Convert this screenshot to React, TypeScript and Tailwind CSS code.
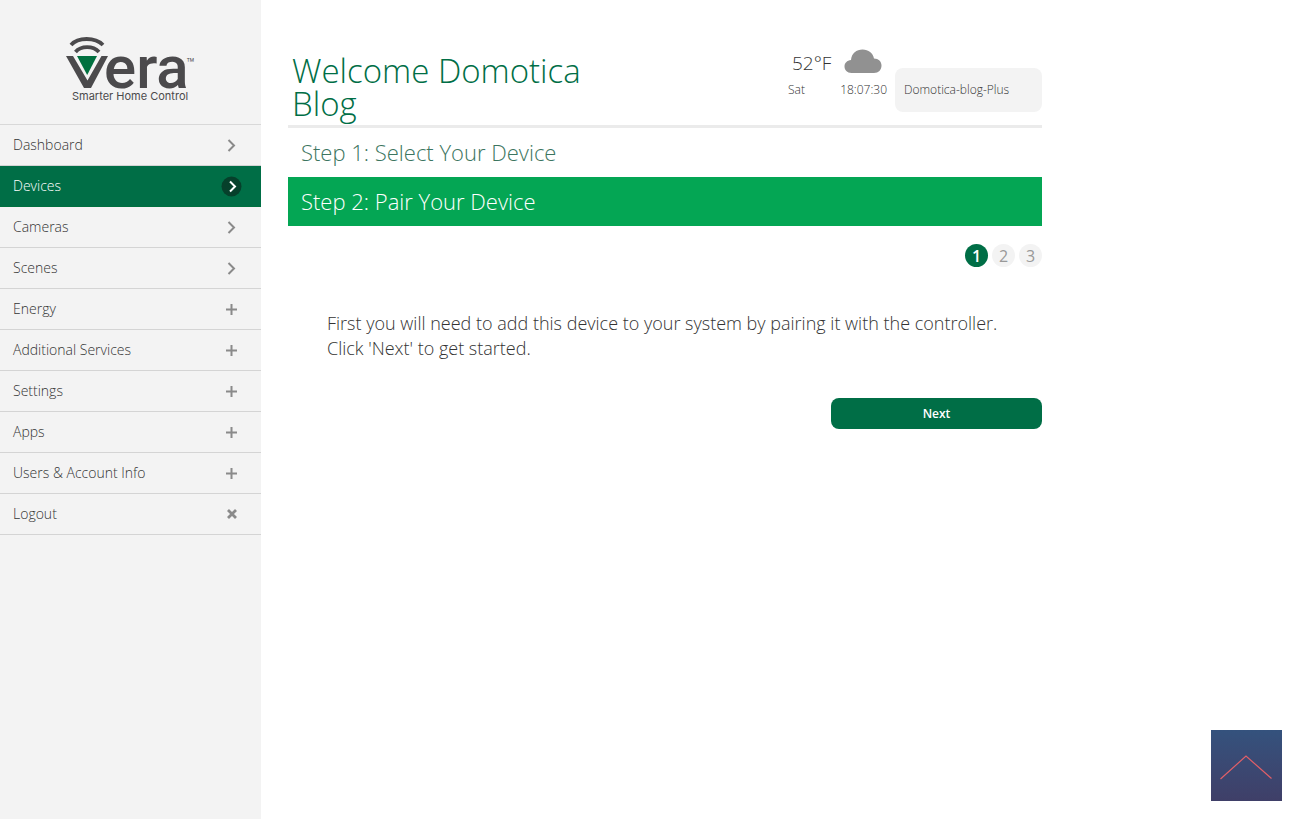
import React from "react";

type Mark = "chevron" | "plus" | "cross";

const navItems: { label: string; mark: Mark; active?: boolean }[] = [
  { label: "Dashboard", mark: "chevron" },
  { label: "Devices", mark: "chevron", active: true },
  { label: "Cameras", mark: "chevron" },
  { label: "Scenes", mark: "chevron" },
  { label: "Energy", mark: "plus" },
  { label: "Additional Services", mark: "plus" },
  { label: "Settings", mark: "plus" },
  { label: "Apps", mark: "plus" },
  { label: "Users & Account Info", mark: "plus" },
  { label: "Logout", mark: "cross" },
];

const markPaths: Record<Mark, string> = {
  chevron: "M7.5 5 L13 10.5 L7.5 16",
  plus: "M10.5 5 V16 M5 10.5 H16",
  cross: "M7 6 L15 14 M15 6 L7 14",
};

function NavMark({ mark, active }: { mark: Mark; active?: boolean }) {
  return (
    <svg viewBox="0 0 21 21" className="size-[21px] shrink-0" fill="none" aria-hidden="true">
      {active && <circle cx="10.5" cy="10.5" r="10" fill="#06402b" />}
      <path
        d={active ? "M9 5.5 L14 10.5 L9 15.5" : markPaths[mark]}
        stroke={active ? "#ffffff" : "#8a8a8a"}
        strokeWidth={mark === "cross" ? 2.8 : 2}
      />
    </svg>
  );
}

function Logo() {
  return (
    <svg
      viewBox="0 0 132 68"
      className="h-[68px] w-[132px] overflow-visible"
      role="img"
      aria-label="Vera Smarter Home Control"
    >
      <g fill="none" stroke="#4b4a4c">
        <path d="M6 9 C13 1 30 1 38 9" strokeWidth="3.8" />
        <path d="M10.5 16 C16 9.5 28 9.5 34 16" strokeWidth="3.8" />
      </g>
      <path d="M1 20 H8 L22.5 44.500 L36.500 20 H43 L26 52 H19 Z" fill="#4b4a4c" />
      <path d="M12 20 H32 L22.2 39 Z" fill="#00703f" />
      <text x="39" y="52" fontSize="60" fontWeight="500" fill="#4b4a4c" fontFamily="Roboto, sans-serif">
        era
      </text>
      <text x="121" y="32" fontSize="14" fill="#4b4a4c" fontFamily="Roboto, sans-serif">
        ™
      </text>
      <text x="7" y="64" fontSize="11" fontWeight="400" fill="#4b4a4c" fontFamily="Inter, sans-serif">
        Smarter Home Control
      </text>
    </svg>
  );
}

function Sidebar() {
  return (
    <aside className="w-[261px] shrink-0 bg-[#f3f3f3]">
      <div className="flex h-[125px] items-start justify-center border-b border-[#d8d8d8] pt-9">
        <Logo />
      </div>
      <nav>
        <ul>
          {navItems.map((item) => (
            <li key={item.label}>
              <a
                href="#"
                className={
                  item.active
                    ? "flex h-[41px] items-center justify-between border-b border-[#00703f] bg-[#006e46] pr-[19px] pl-[13px] text-white"
                    : "flex h-[41px] items-center justify-between border-b border-[#d4d4d4] pr-[19px] pl-[13px] text-[#333333]"
                }
              >
                <span>{item.label}</span>
                <NavMark mark={item.mark} active={item.active} />
              </a>
            </li>
          ))}
        </ul>
      </nav>
    </aside>
  );
}

function Header() {
  return (
    <header className="flex justify-between border-b-[3px] border-[#ebebeb] pt-[54px] pb-[5px] pl-1">
      <h1 className="w-80 text-[33px] leading-[33px] text-[#006e46]">Welcome Domotica Blog</h1>
      <div className="-mt-2 flex gap-2">
        <div className="flex w-[99px] flex-col">
          <div className="flex h-[35px] items-start justify-between pr-[5px] pl-1">
            <span className="text-[19px] leading-[35px] text-[#333333]">52°F</span>
            <svg viewBox="0 0 38 24" className="mt-[3px] h-6 w-[38px]" fill="#919191" aria-hidden="true">
              <path d="M7.5 24 C3 24 .5 21 .5 17.5 C.5 14 3 11.5 7 11 C7.5 4.5 12.5 .5 18.5 .5 C24.5 .5 29 4 30 9.5 C34.5 9.5 37.5 12.5 37.5 16.5 C37.5 21 34.5 24 30 24 Z" />
            </svg>
          </div>
          <div className="flex h-[18px] items-center justify-between text-xs text-[#333333]">
            <span>Sat</span>
            <span>18:07:30</span>
          </div>
        </div>
        <div className="mt-[22px] flex h-11 w-[147px] items-center rounded-lg bg-[#f3f3f3] pl-[9px] text-xs text-[#333333]">
          Domotica-blog-Plus
        </div>
      </div>
    </header>
  );
}

export default function App() {
  return (
    <div className="flex min-h-screen bg-white font-['Open_Sans',sans-serif] text-sm font-light">
      <Sidebar />
      <main className="ml-[27px] w-full max-w-[754px]">
        <Header />
        <h2 className="flex h-[49px] items-center pl-[13px] text-[22px] text-[#3c7560]">Step 1: Select Your Device</h2>
        <h2 className="flex h-[49px] items-center bg-[#04a654] pl-[13px] text-[22px] text-white">
          Step 2: Pair Your Device
        </h2>
        <ol className="mt-[18px] flex justify-end gap-1 text-base font-medium">
          <li className="flex size-[23px] items-center justify-center rounded-full bg-[#006e46] font-semibold text-white">
            1
          </li>
          <li className="flex size-[23px] items-center justify-center rounded-full bg-[#f3f3f3] text-[#999999]">2</li>
          <li className="flex size-[23px] items-center justify-center rounded-full bg-[#f3f3f3] text-[#999999]">3</li>
        </ol>
        <p className="mt-11 pl-[39px] text-lg leading-[25px] text-[#333333]">
          First you will need to add this device to your system by pairing it with the controller.
          <br />
          Click 'Next' to get started.
        </p>
        <div className="mt-[37px] flex justify-end">
          <button type="button" className="h-[31px] w-[211px] rounded-lg bg-[#006e46] text-xs font-semibold text-white">
            Next
          </button>
        </div>
      </main>
      <button
        type="button"
        aria-label="Back to top"
        className="fixed right-[18px] bottom-[18px] size-[71px] bg-linear-to-b from-[#34527d] to-[#3f3f68]"
      >
        <svg viewBox="0 0 71 71" className="size-full" fill="none" aria-hidden="true">
          <path d="M9.5 49 L35 26 L60.5 48.5" stroke="#e05f68" strokeWidth="1.2" />
        </svg>
      </button>
    </div>
  );
}
